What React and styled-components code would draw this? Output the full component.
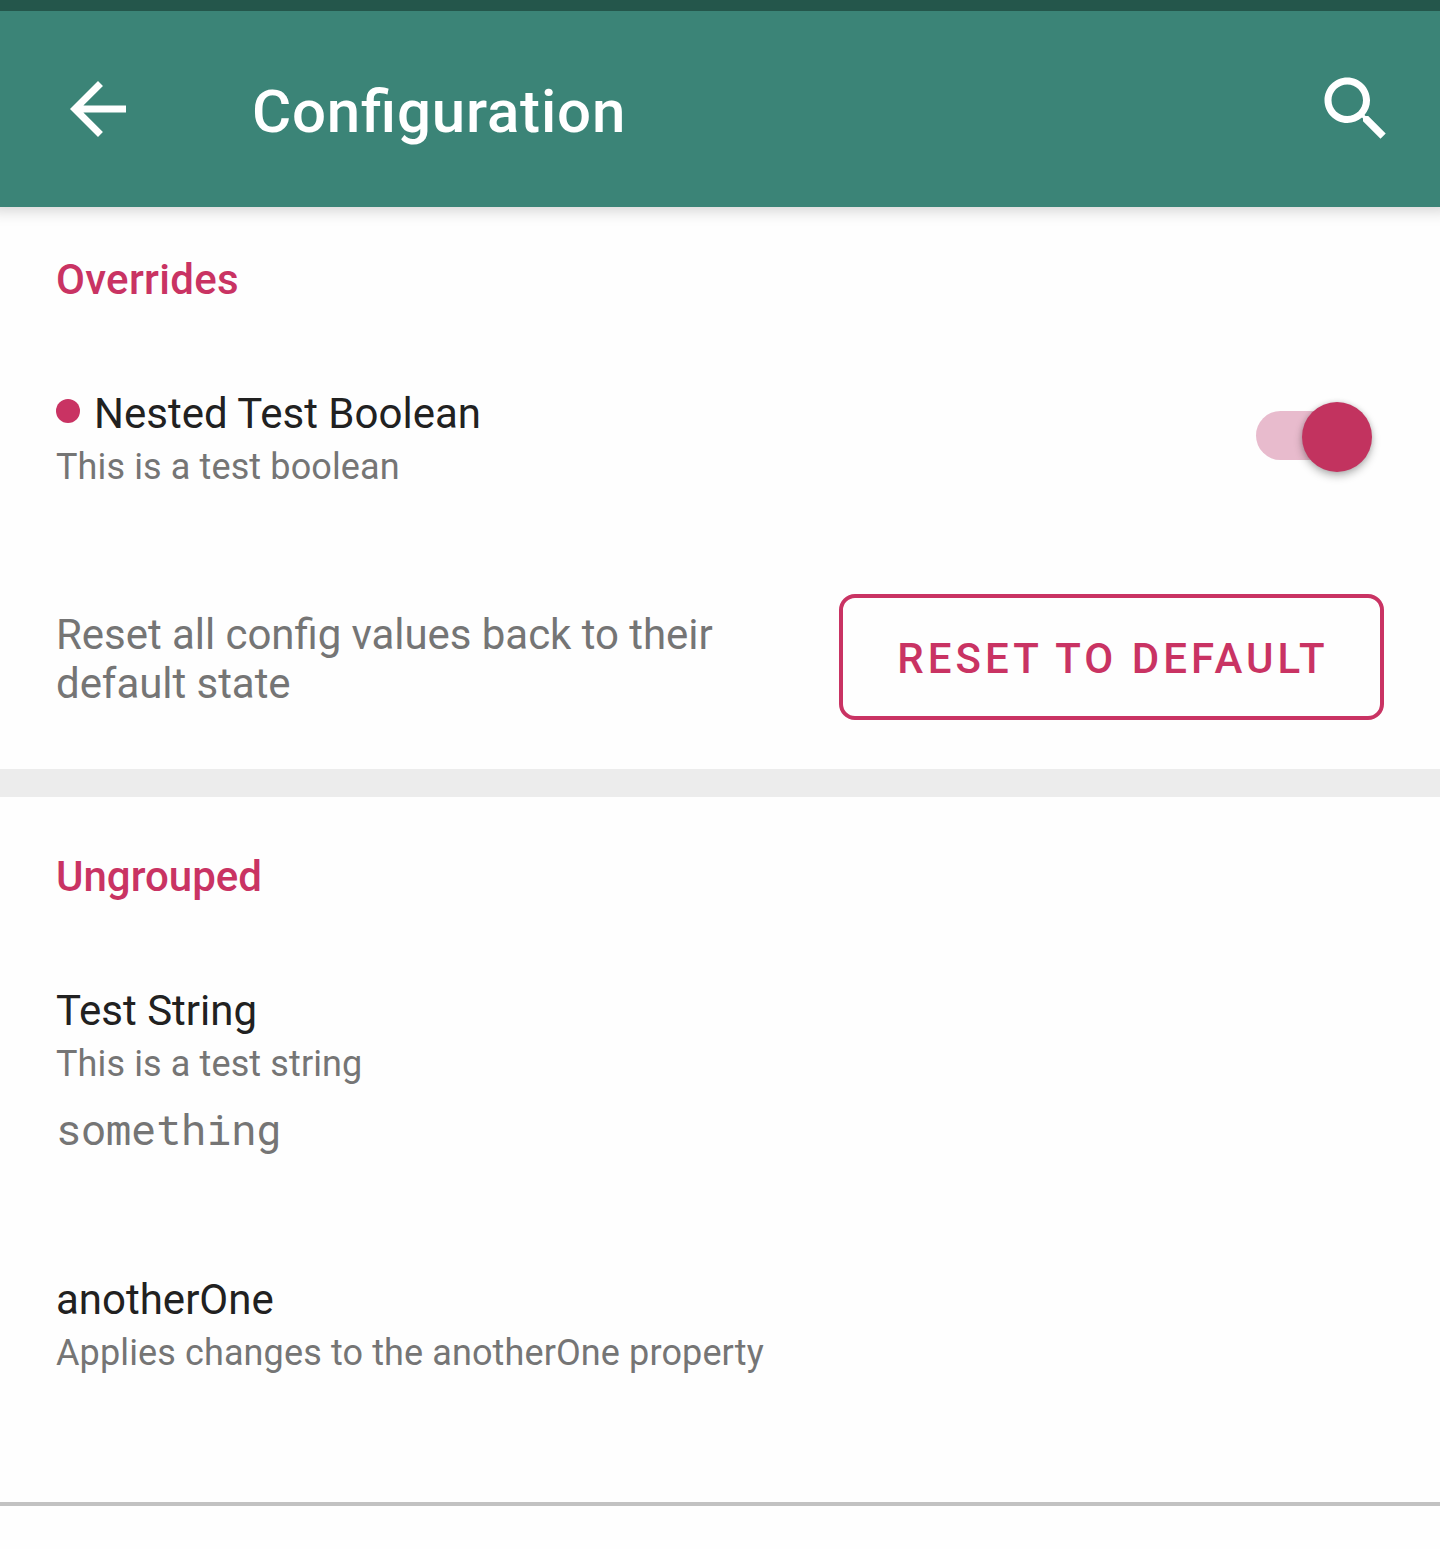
import React from "react";
import styled, { createGlobalStyle } from "styled-components";

const Global = createGlobalStyle`
  *, *::before, *::after { box-sizing: border-box; }
  body { margin: 0; background: #fefefe; font-family: Roboto, "Liberation Sans", sans-serif; }
`;

const Screen = styled.div`
  height: 1549px;
  display: flex;
  flex-direction: column;
`;
const StatusBar = styled.div`
  height: 11px;
  background: #24564b;
`;
const Toolbar = styled.header`
  height: 196px;
  flex: none;
  display: flex;
  align-items: center;
  padding: 0 42px 0 56px;
  background: #3b8477;
  color: #fff;
  box-shadow: 0 -6px 14px 10px rgba(0, 0, 0, 0.17);
  clip-path: inset(0 0 -30px 0);
`;
const Icon = styled.svg`
  width: 84px;
  height: 84px;
  fill: currentColor;
`;
const Title = styled.h1`
  margin: 6px 0 0 112px;
  flex: 1;
  font-size: 60px;
  font-weight: 500;
  line-height: 70px;
  letter-spacing: 0.82px;
  font-feature-settings: "liga" 1;
`;
const Section = styled.section`
  padding: ${(p) => p.$top}px 56px 0;
  height: ${(p) => p.$height}px;
`;
const Heading = styled.h2`
  margin: 0;
  font-size: 42px;
  font-weight: 500;
  line-height: 50px;
  letter-spacing: ${(p) => p.$tracking || 0}px;
  color: #c93363;
`;
const Row = styled.div`
  display: flex;
  justify-content: space-between;
  align-items: flex-start;
  margin-top: ${(p) => p.$gap}px;
`;
const Name = styled.div`
  display: flex;
  align-items: center;
  font-size: 42px;
  line-height: 50px;
  color: #212121;
`;
const Dot = styled.span`
  width: 24px;
  height: 24px;
  margin: -6px 14px 0 0;
  border-radius: 50%;
  background: #c93363;
`;
const Detail = styled.div`
  margin-top: 7px;
  font-size: 36px;
  line-height: 42px;
  letter-spacing: 0.12px;
  color: #757575;
`;
const Value = styled.div`
  margin-top: 19px;
  font-family: "Roboto Mono", "Liberation Mono", monospace;
  font-size: 42px;
  line-height: 50px;
  letter-spacing: -0.18px;
  color: #757575;
`;
const Track = styled.div`
  position: relative;
  width: 112px;
  height: 49px;
  margin: 22px 16px 0 0;
  border-radius: 25px;
  background: #e8bbcd;
`;
const Thumb = styled.div`
  position: absolute;
  top: -9px;
  right: -4px;
  width: 70px;
  height: 70px;
  border-radius: 50%;
  background: #c2335f;
  box-shadow: 0 4px 8px rgba(0, 0, 0, 0.28), 0 0 5px rgba(0, 0, 0, 0.12);
`;
const Note = styled.p`
  margin: 16px 0 0;
  font-size: 42px;
  line-height: 49px;
  letter-spacing: -0.05px;
  font-feature-settings: "liga" 1;
  color: #757575;
`;
const Button = styled.button`
  width: 545px;
  height: 126px;
  padding: 4px 0 0 3px;
  border: 4px solid #c93363;
  border-radius: 16px;
  background: transparent;
  color: #c93363;
  font: 500 42px/50px Roboto, "Liberation Sans", sans-serif;
  letter-spacing: 4.02px;
  white-space: nowrap;
`;
const Band = styled.div`
  height: 28px;
  background: #ececec;
`;
const Line = styled.div`
  height: 4px;
  background: #c2c2c2;
`;

export default function App() {
  return (
    <Screen>
      <Global />
      <StatusBar />
      <Toolbar>
        <Icon viewBox="0 0 24 24"><path d="M20 11H7.83l5.59-5.59L12 4l-8 8 8 8 1.41-1.41L7.83 13H20v-2z" /></Icon>
        <Title>Configuration</Title>
        <Icon viewBox="0 0 24 24"><path d="M15.5 14h-.79l-.28-.27C15.41 12.59 16 11.11 16 9.5 16 5.91 13.09 3 9.5 3S3 5.91 3 9.5 5.91 16 9.5 16c1.61 0 3.09-.59 4.23-1.57l.27.28v.79l5 4.99L20.49 19l-4.99-5zm-6 0C7.01 14 5 11.99 5 9.5S7.01 5 9.5 5 14 7.01 14 9.5 11.99 14 9.5 14z" /></Icon>
      </Toolbar>
      <Section $top={48} $height={562}>
        <Heading $tracking={0.3}>Overrides</Heading>
        <Row $gap={84}>
          <div>
            <Name><Dot />Nested Test Boolean</Name>
            <Detail>This is a test boolean</Detail>
          </div>
          <Track><Thumb /></Track>
        </Row>
        <Row $gap={106}>
          <Note>Reset all config values back to their<br />default state</Note>
          <Button>RESET TO DEFAULT</Button>
        </Row>
      </Section>
      <Band />
      <Section $top={55} $height={705}>
        <Heading>Ungrouped</Heading>
        <Row $gap={84}>
          <div>
            <Name>Test String</Name>
            <Detail>This is a test string</Detail>
            <Value>something</Value>
          </div>
        </Row>
        <Row $gap={121}>
          <div>
            <Name>anotherOne</Name>
            <Detail>Applies changes to the anotherOne property</Detail>
          </div>
        </Row>
      </Section>
      <Line />
    </Screen>
  );
}
